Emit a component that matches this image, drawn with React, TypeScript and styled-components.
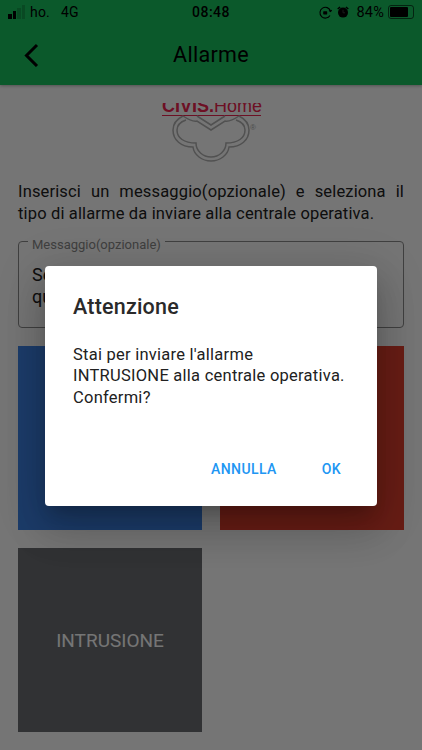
import React from 'react';
import styled, { createGlobalStyle } from 'styled-components';

const GlobalStyle = createGlobalStyle`
    html, body {
        margin: 0;
        padding: 0;
        background: #fff;
        font-family: Roboto, "Liberation Sans", sans-serif;
    }
`;

function CivisLogo() {
    return (
        <LogoSvg width="116" height="62" viewBox="0 0 116 62" fill="none">
            <text x="9" y="9" fontFamily='"Liberation Sans", sans-serif' fontSize="18" fill="#ee2450">
                <tspan fontWeight="700">CIVIS.</tspan>Home
            </text>
            <path stroke="#ee2450" d="M9 12.5h99" />
            <g stroke="#b0b0b0" strokeWidth="1.5">
                <path d="M30 13C24 16 20 21 20 27 20 37 28 44 40 44 41 52 49 58 58 58 67 58 75 52 76 44 88 44 96 37 96 27 96 21 92 16 86 13" />
                <path d="M33 17C27 19 24 23 24 27 24 35 31 40 43 40 43 48 50 54 58 54 66 54 73 48 73 40 85 40 92 35 92 27 92 23 89 19 83 17" />
                <path d="M30 13C36 17 40 19 44 18L58 27 72 18C76 19 80 17 86 13" />
                <path d="M44 13 58 22 72 13" />
            </g>
            <text x="97" y="27" fontFamily='"Liberation Sans", sans-serif' fontSize="8" fill="#a8a8a8">®</text>
        </LogoSvg>
    );
}

function StatusBar() {
    return (
        <StatusRow>
            <StatusSide>
                <Signal>
                    <SignalBar level={5} on />
                    <SignalBar level={8} on />
                    <SignalBar level={11} />
                    <SignalBar level={14} />
                </Signal>
                <span>ho.</span>
                <Network>4G</Network>
            </StatusSide>
            <Clock>08:48</Clock>
            <StatusSide>
                <svg width="13" height="13" viewBox="0 0 13 13" fill="none" stroke="#000">
                    <path strokeWidth="1.1" d="M11 9.5A5.4 5.4 0 1 1 11.5 5" />
                    <path strokeWidth="1.1" d="M10 4.5l1.6 1 1-1.5" />
                    <rect x="4.2" y="5.2" width="4" height="3.2" rx=".6" fill="#000" stroke="none" />
                </svg>
                <svg width="14" height="14" viewBox="0 0 14 14" fill="#000">
                    <circle cx="7" cy="7.6" r="5" />
                    <path d="M1.2 3.6 3.6 1.4l1 1L2.2 4.6zM12.8 3.6l-2.4-2.2-1 1 2.4 2.2z" />
                    <path d="M7 4.8v3h2" fill="none" stroke="#3a3a3a" strokeWidth="1" />
                </svg>
                <Percent>84%</Percent>
                <Battery>
                    <BatteryFill />
                </Battery>
            </StatusSide>
        </StatusRow>
    );
}

export default function App() {
    return (
        <Screen>
            <GlobalStyle />
            <Header>
                <StatusBar />
                <NavBar>
                    <BackIcon width="16" height="24" viewBox="0 0 16 24" fill="none" stroke="#000">
                        <path strokeWidth="3" d="M14 2 3.5 12.5 14 23" />
                    </BackIcon>
                    <NavTitle>Allarme</NavTitle>
                </NavBar>
            </Header>
            <Content>
                <CivisLogo />
                <Intro>
                    <IntroFirstLine>Inserisci un messaggio(opzionale) e seleziona il</IntroFirstLine>
                    tipo di allarme da inviare alla centrale operativa.
                </Intro>
                <MessageField>
                    <MessageLegend>Messaggio(opzionale)</MessageLegend>
                    <MessageText>Se vuoi, scrivi i dettagli dell'evento in corso, qui o altrove</MessageText>
                </MessageField>
                <AlarmGrid>
                    <AlarmTile color="#3e84e8" />
                    <AlarmTile color="#e3402f" />
                    <AlarmTile color="#6b6e72">INTRUSIONE</AlarmTile>
                </AlarmGrid>
            </Content>
            <Overlay>
                <Dialog>
                    <DialogTitle>Attenzione</DialogTitle>
                    <DialogBody>
                        Stai per inviare l'allarme INTRUSIONE alla centrale operativa. Confermi?
                    </DialogBody>
                    <DialogActions>
                        <DialogButton>ANNULLA</DialogButton>
                        <DialogButton>OK</DialogButton>
                    </DialogActions>
                </Dialog>
            </Overlay>
        </Screen>
    );
}

const Screen = styled.div`
    position: relative;
    width: 422px;
    height: 750px;
    overflow: hidden;
    background: #fff;
`;

const Header = styled.header`
    height: 85px;
    background: #19c35f;
    box-shadow: 0 1px 3px rgba(0, 0, 0, .3);
`;

const StatusRow = styled.div`
    height: 24px;
    padding: 0 8px 0 8px;
    display: flex;
    align-items: center;
    justify-content: space-between;
    position: relative;
    font-size: 14px;
    letter-spacing: .2px;
    color: #000;
`;

const StatusSide = styled.div`
    display: flex;
    align-items: center;
    gap: 4px;
`;

const Signal = styled.div`
    display: flex;
    align-items: flex-end;
    gap: 1px;
    height: 14px;
    margin-right: 1px;
`;

const SignalBar = styled.i<{ level: number; on?: boolean }>`
    width: 3.5px;
    height: ${({ level }) => level}px;
    background: ${({ on }) => (on ? '#000' : 'rgba(0, 0, 0, .18)')};
`;

const Network = styled.span`
    margin-left: 7px;
`;

const Clock = styled.span`
    position: absolute;
    left: 0;
    right: 0;
    text-align: center;
    font-weight: 500;
    font-size: 14px;
    letter-spacing: .5px;
`;

const Percent = styled.span`
    margin-left: 2px;
    font-size: 14.5px;
`;

const Battery = styled.div`
    width: 22px;
    height: 10px;
    padding: 1px;
    border: 1px solid rgba(0, 0, 0, .6);
    border-radius: 3px;
    display: flex;
`;

const BatteryFill = styled.div`
    width: 84%;
    background: #000;
    border-radius: 1px;
`;

const NavBar = styled.div`
    height: 61px;
    display: flex;
    align-items: center;
    justify-content: center;
    position: relative;
`;

const BackIcon = styled.svg`
    position: absolute;
    left: 23px;
    top: 19px;
`;

const NavTitle = styled.h1`
    margin: 0;
    font-size: 21.5px;
    font-weight: 400;
    letter-spacing: .3px;
    color: #000;
`;

const Content = styled.main`
    padding: 18px 18px 0;
    display: flex;
    flex-direction: column;
`;

const LogoSvg = styled.svg`
    align-self: center;
    display: block;
    background: #fff;
`;

const Intro = styled.p`
    margin: 16px 0 0;
    font-size: 16.5px;
    line-height: 21.5px;
    letter-spacing: .15px;
    text-align: left;
    color: #212121;
`;

const IntroFirstLine = styled.span`
    display: block;
    text-align: justify;
    text-align-last: justify;
`;

const MessageField = styled.fieldset`
    margin: 13px 0 0;
    padding: 19px 13px 0;
    height: 91px;
    box-sizing: border-box;
    border: 1px solid #8c8c8c;
    border-radius: 4px;
    min-width: 0;
`;

const MessageLegend = styled.legend`
    height: 8px;
    padding: 0 4px;
    margin-left: -4px;
    font-size: 13px;
    line-height: 16px;
    color: #8a8a8a;
`;

const MessageText = styled.div`
    font-size: 18px;
    line-height: 22px;
    color: #212121;
`;

const AlarmGrid = styled.div`
    margin-top: 18px;
    display: grid;
    grid-template-columns: 184px 184px;
    grid-auto-rows: 184px;
    gap: 18px;
`;

const AlarmTile = styled.div<{ color: string }>`
    background: ${({ color }) => color};
    color: #fff;
    font-size: 19px;
    display: flex;
    align-items: center;
    justify-content: center;
`;

const Overlay = styled.div`
    position: absolute;
    inset: 0;
    background: rgba(0, 0, 0, .54);
    padding-top: 266px;
    box-sizing: border-box;
    display: flex;
    justify-content: center;
    align-items: flex-start;
`;

const Dialog = styled.div`
    width: 332px;
    height: 240px;
    box-sizing: border-box;
    padding: 28px 28px 21px;
    background: #fff;
    border-radius: 4px;
    box-shadow: 0 11px 15px -7px rgba(0, 0, 0, .2), 0 24px 38px 3px rgba(0, 0, 0, .14), 0 9px 46px 8px rgba(0, 0, 0, .12);
    display: flex;
    flex-direction: column;
`;

const DialogTitle = styled.h2`
    margin: 0;
    font-size: 21.5px;
    font-weight: 500;
    line-height: 26px;
    letter-spacing: .2px;
    color: #2a2a2a;
`;

const DialogBody = styled.p`
    margin: 24px 0 0;
    font-size: 16.5px;
    line-height: 21.3px;
    letter-spacing: .25px;
    color: #212121;
`;

const DialogActions = styled.div`
    margin-top: auto;
    display: flex;
    justify-content: flex-end;
    gap: 29px;
`;

const DialogButton = styled.button`
    border: 0;
    background: none;
    padding: 8px;
    font-family: Roboto, sans-serif;
    font-size: 14px;
    font-weight: 500;
    letter-spacing: .4px;
    color: #2196f3;
`;
